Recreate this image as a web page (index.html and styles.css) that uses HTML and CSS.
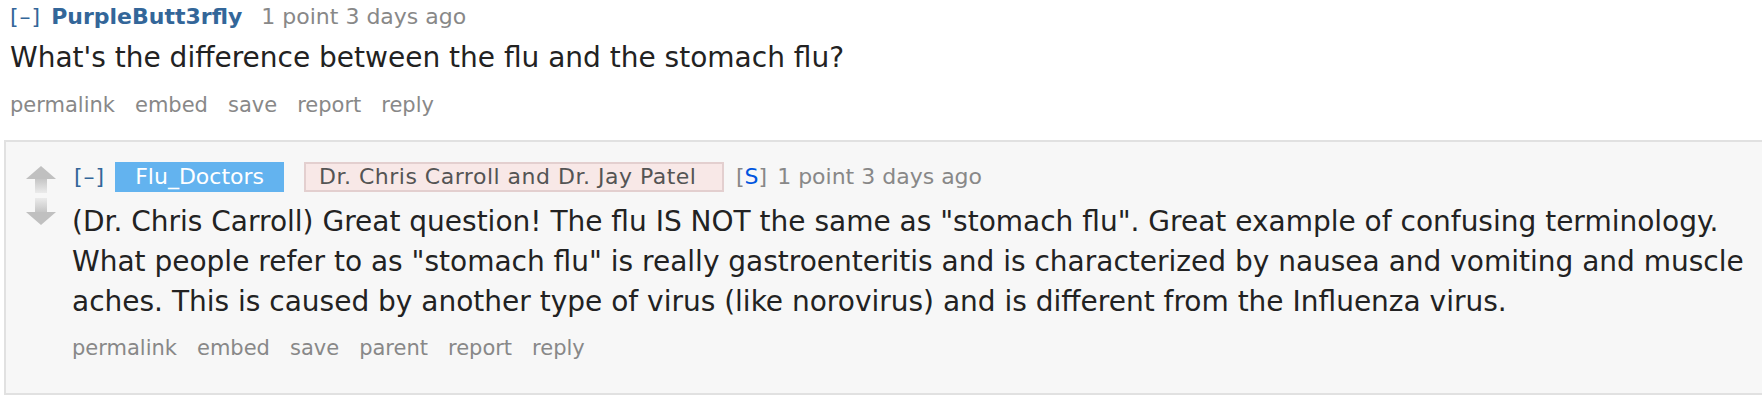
FILE: index.html
```html
<!DOCTYPE html>
<html>
<head>
<meta charset="utf-8">
<link rel="stylesheet" href="styles.css">
</head>
<body>
<div class="comment top">
  <div class="tagline">
    <a class="expand">[–]</a>
    <a class="author">PurpleButt3rfly</a>
    <span class="score">1 point 3 days ago</span>
  </div>
  <div class="md"><p>What's the difference between the flu and the stomach flu?</p></div>
  <ul class="buttons">
    <li>permalink</li><li>embed</li><li>save</li><li>report</li><li>reply</li>
  </ul>
</div>
<div class="child">
  <div class="midcol">
    <svg class="arrow" width="30" height="27" viewBox="0 0 30 27">
      <defs>
        <linearGradient id="gu" x1="0" y1="0" x2="0" y2="1">
          <stop offset="0" stop-color="#c0c0c0"/>
          <stop offset="1" stop-color="#ebebeb"/>
        </linearGradient>
      </defs>
      <rect x="9" y="11" width="12" height="16" fill="url(#gu)"/>
      <polygon points="15,0 30,13 0,13" fill="#c0c0c0"/>
    </svg>
    <svg class="arrow" width="30" height="27" viewBox="0 0 30 27">
      <defs>
        <linearGradient id="gd" x1="0" y1="1" x2="0" y2="0">
          <stop offset="0" stop-color="#c0c0c0"/>
          <stop offset="1" stop-color="#ebebeb"/>
        </linearGradient>
      </defs>
      <rect x="9" y="0" width="12" height="16" fill="url(#gd)"/>
      <polygon points="15,27 30,14 0,14" fill="#c0c0c0"/>
    </svg>
  </div>
  <div class="entry">
    <div class="tagline row">
      <a class="expand">[–]</a>
      <a class="badge">Flu_Doctors</a>
      <span class="flair">Dr. Chris Carroll and Dr. Jay Patel</span>
      <span class="submitter">[<b>S</b>]</span>
      <span class="score">1 point 3 days ago</span>
    </div>
    <div class="md"><p>(Dr. Chris Carroll) Great question! The flu IS NOT the same as "stomach flu". Great example of confusing terminology. What people refer to as "stomach flu" is really gastroenteritis and is characterized by nausea and vomiting and muscle aches. This is caused by another type of virus (like norovirus) and is different from the Influenza virus.</p></div>
    <ul class="buttons">
      <li>permalink</li><li>embed</li><li>save</li><li>parent</li><li>report</li><li>reply</li>
    </ul>
  </div>
</div>
</body>
</html>
```
FILE: styles.css
```css
html, body {
  margin: 0;
  padding: 0;
  background: #fff;
  font-family: "DejaVu Sans", Verdana, sans-serif;
}
.comment.top {
  padding-left: 10px;
}
.tagline {
  font-size: 22px;
  line-height: 34px;
  height: 34px;
  color: #888;
  white-space: nowrap;
}
.expand {
  color: #369;
  letter-spacing: 1px;
  margin-right: 3px;
}
.author {
  color: #369;
  font-weight: bold;
  margin-right: 12px;
}
.md p {
  margin: 4px 0 0;
  font-size: 28px;
  line-height: 40px;
  color: #222;
}
.buttons {
  list-style: none;
  margin: 10px 0 0;
  padding: 0;
  display: flex;
  gap: 20px;
  font-size: 21px;
  line-height: 34px;
  color: #888;
}
.child {
  margin: 18px 0 0 4px;
  border: 2px solid #e1e1e1;
  border-right: none;
  background: #f7f7f7;
  display: flex;
  padding: 20px 0 28px 20px;
}
.midcol {
  width: 30px;
  margin-right: 16px;
  display: flex;
  flex-direction: column;
  gap: 5px;
  padding-top: 4px;
}
.arrow {
  display: block;
}
.entry {
  flex: 1;
}
.tagline.row {
  display: flex;
  align-items: center;
  height: 30px;
  line-height: 30px;
  padding-left: 2px;
}
.row .expand {
  margin-right: 10px;
}
.badge {
  background: #63b3ef;
  color: #fff;
  height: 30px;
  padding: 0 20px;
  margin-right: 20px;
}
.flair {
  box-sizing: border-box;
  width: 420px;
  background: #f8e8e7;
  border: 2px solid #e3cfcf;
  color: #545454;
  height: 30px;
  line-height: 26px;
  padding: 0 0 0 13px;
  letter-spacing: 0.5px;
  margin-right: 12px;
}
.submitter {
  color: #888;
  margin-right: 10px;
}
.submitter b {
  color: #0055df;
  font-weight: normal;
}
.entry .md p {
  margin-top: 10px;
}
.entry .buttons {
  margin-top: 9px;
}
```
